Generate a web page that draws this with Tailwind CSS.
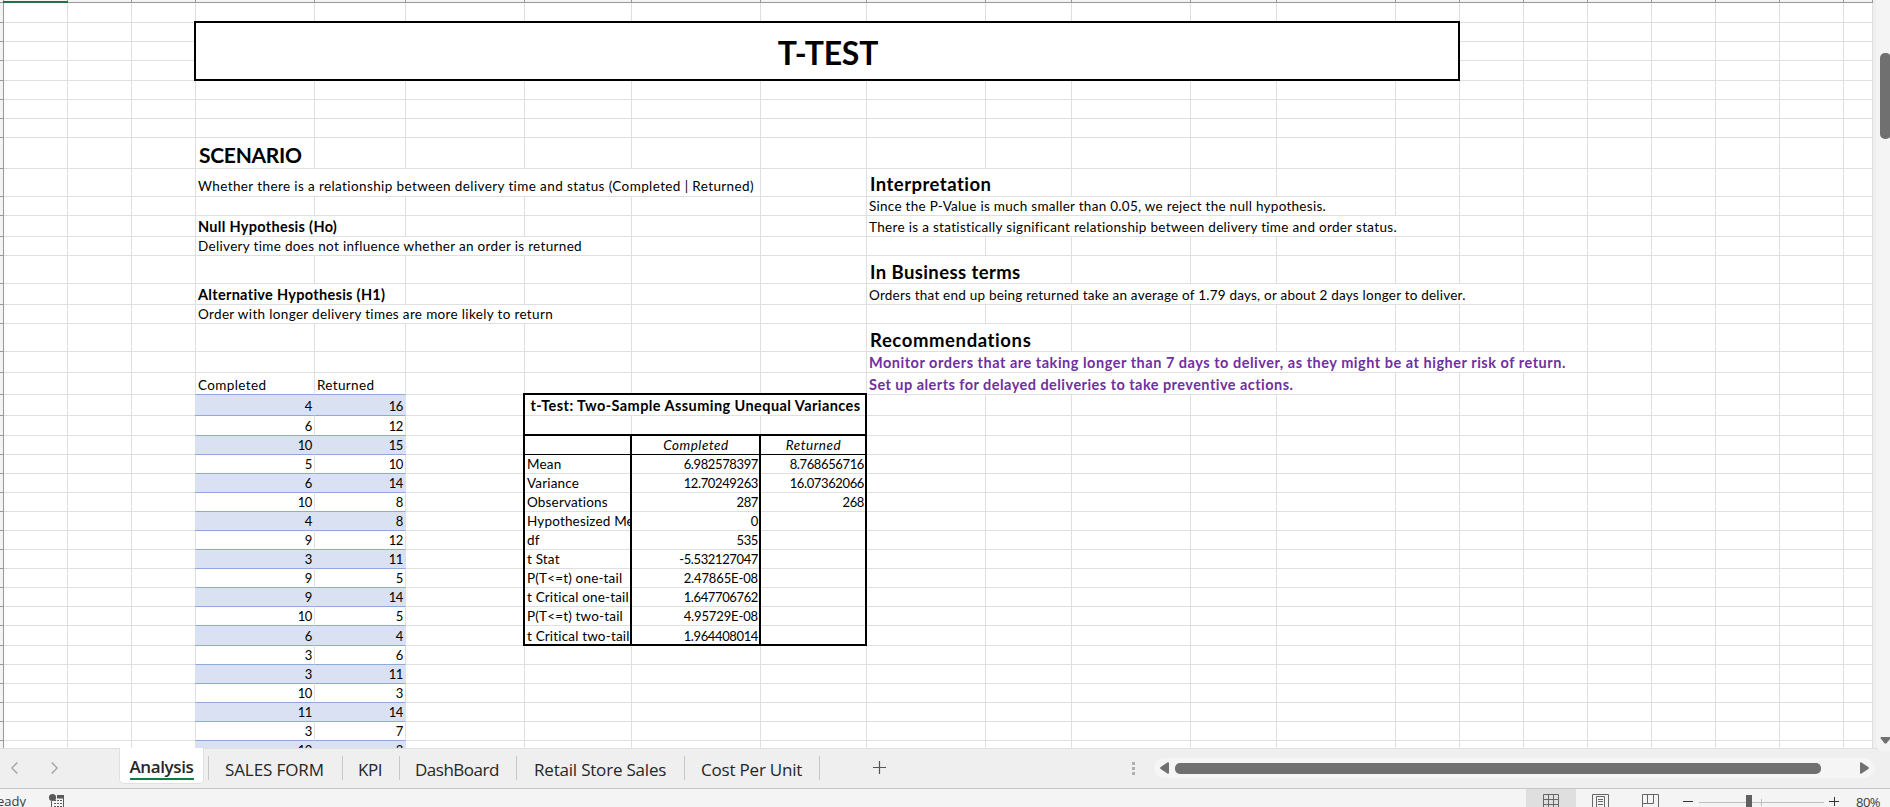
<!DOCTYPE html>
<html lang="en">
<head>
<meta charset="utf-8">
<title>Retail Store - Analysis</title>
<script src="https://cdn.jsdelivr.net/npm/@tailwindcss/browser@4"></script>
</head>
<body class="w-[1890px] h-[807px] overflow-hidden bg-[#efefef] flex flex-col font-['Lato',sans-serif] text-black">

<main class="flex h-[748px]">
  <!-- row header edge -->
  <div id="rowEdge" class="w-[4px] h-[748px] shrink-0 bg-[#f3f3f3] border-r border-[#999] flex flex-col pt-[2px] overflow-hidden"></div>
  <div class="w-[1869px] shrink-0 flex flex-col">
    <!-- column header edge -->
    <div id="colEdge" class="h-[3px] shrink-0 bg-[#f3f3f3] border-b border-[#999] flex relative"><div class="absolute -left-px top-[1px] w-[65px] h-[2px] bg-[#217346]"></div></div>
    <div id="sheet" class="grid w-[1869px] h-[745px] overflow-hidden bg-white grid-cols-[64px_64px_64px_119px_91px_119px_107px_129px_106px_119px_86px_119px_86px_119px_64px_64px_64px_64px_64px_64px_64px_29px] grid-rows-[20px_19px_19px_20px_19px_19px_19px_31px_28px_19px_21px_19px_28px_21px_19px_28px_21px_22px_21px_20px_19px_19px_19px_19px_19px_19px_19px_19px_19px_19px_20px_19px_19px_19px_19px_19px_7px]"></div>
  </div>
  <!-- vertical scrollbar -->
  <div class="flex-1 flex pl-[3px] relative">
    <div class="flex-1 h-[751px] bg-[#f4f4f4] flex flex-col justify-between pl-1 pt-[53px] pb-[7px] rounded-bl-lg">
      <div class="w-[11px] h-[86px] rounded-[5px] bg-[#707070]"></div>
      <svg class="w-[11px] h-[7px] shrink-0" viewBox="0 0 11 7"><path d="M1 0H10Q11 .8 10.300 1.600L6.500 6.300Q5.500 7.200 4.500 6.300L.7 1.600Q0 .8 1 0Z" fill="#707070"/></svg>
    </div>
  </div>
</main>

<!-- sheet tabs -->
<nav class="h-[40px] shrink-0 bg-[#efefef] border-t border-[#e0e0e0] flex font-['Open_Sans',sans-serif] text-[17px] text-[#262626]">
  <div class="w-[119px] flex pt-[13px] pl-[11px] gap-[33px]">
    <svg class="w-[7px] h-[12px]" viewBox="0 0 7 12" fill="none" stroke="#a0a0a0" stroke-width="1.300"><path d="M6.300 .5L.8 6L6.300 11.500"/></svg>
    <svg class="w-[7px] h-[12px]" viewBox="0 0 7 12" fill="none" stroke="#a0a0a0" stroke-width="1.300"><path d="M.7 .5L6.200 6L.7 11.500"/></svg>
  </div>
  <div class="w-[85px] h-[36px] -mt-px bg-white rounded-b-[5px] border-x border-b border-[#e0e0e0] flex flex-col items-center">
    <span class="font-semibold tracking-[-0.38px] leading-[24px] h-[30px] pt-[7px]">Analysis</span>
    <span class="w-[64px] h-[2px] bg-[#107c41]"></span>
  </div>
  <div class="flex h-[24px] mt-[7px] leading-[28px] ml-[4px]">
    <span class="w-[134px] h-[24px] border-l border-[#c8c8c8] pl-[16px] whitespace-nowrap tracking-[-0.1px]">SALES FORM</span>
    <span class="w-[57px] h-[24px] border-l border-[#c8c8c8] pl-[15px] whitespace-nowrap tracking-[-0.5px]">KPI</span>
    <span class="w-[117px] h-[24px] border-l border-[#c8c8c8] pl-[15px] whitespace-nowrap tracking-[-0.5px]">DashBoard</span>
    <span class="w-[168px] h-[24px] border-l border-[#c8c8c8] pl-[17px] whitespace-nowrap tracking-[-0.2px]">Retail Store Sales</span>
    <span class="w-[136px] h-[24px] border-x border-[#c8c8c8] pl-[16px] whitespace-nowrap tracking-[-0.2px]">Cost Per Unit</span>
  </div>
  <svg class="w-[13px] h-[13px] mt-[12px] ml-[53px]" viewBox="0 0 13 13" stroke="#555" stroke-width="1.200"><path d="M6.500 0V13M0 6.500H13"/></svg>
  <div class="ml-[246px] mt-[13px] flex flex-col gap-[2px] w-[3px]">
    <i class="size-[3px] bg-[#b0b0b0]"></i><i class="size-[3px] bg-[#b0b0b0]"></i><i class="size-[3px] bg-[#b0b0b0]"></i>
  </div>
  <div class="ml-[19px] mt-[9px] w-[721px] h-[20px] rounded-full bg-[#f5f5f5] flex items-center pl-[6px]">
    <svg class="w-[9px] h-[12px]" viewBox="0 0 9 12"><path d="M9 1V11Q8.600 12.200 7.400 11.600L.7 7Q-.5 6 .7 5L7.400 .4Q8.600 -.2 9 1Z" fill="#707070"/></svg>
    <div class="ml-[6px] w-[646px] h-[11px] rounded-[5px] bg-[#707070]"></div>
    <svg class="ml-[39px] w-[9px] h-[12px]" viewBox="0 0 9 12"><path d="M0 1V11Q.4 12.200 1.600 11.600L8.300 7Q9.500 6 8.300 5L1.600 .4Q.4 -.2 0 1Z" fill="#707070"/></svg>
  </div>
</nav>

<!-- status bar -->
<footer class="h-[19px] shrink-0 bg-[#f4f4f4] border-t border-[#c6c6c6] flex overflow-hidden font-['Open_Sans',sans-serif] text-[#3b3b3b]">
  <span class="w-[60px] -ml-[11px] text-[13px] leading-[25px] whitespace-nowrap">Ready</span>
  <svg class="w-[16px] h-[18px]" viewBox="0 0 16 18"><path fill="none" stroke="#5a5a5a" d="M2.500 12V18M14.500 9V18"/><path fill="none" stroke="#5a5a5a" stroke-dasharray="2 1" d="M5 11.500H13M5 14.500H13M5 17.500H13"/><rect x="8" y="6" width="7" height="3.500" fill="#5a5a5a"/><circle cx="3.500" cy="8.500" r="3.600" fill="#5a5a5a"/></svg>
  <div class="ml-auto flex w-[364px] shrink-0">
    <div class="w-[50px] bg-[#dfdfdf] pl-[17px]">
      <svg class="w-[16px] h-[18px]" viewBox="0 0 16 18" fill="none" stroke="#666"><path d="M.5 18V5.500H15.500V18M5.500 5V18M10.500 5V18M0 10.500H16M0 15.500H16"/></svg>
    </div>
    <svg class="w-[17px] h-[18px] ml-[16px]" viewBox="0 0 17 18" fill="none" stroke="#666"><path d="M.5 18V5.500H16.500V18M4.500 18V7.500H12.500V18M6 10.500H11M6 12.500H11M6 15.500H11"/></svg>
    <svg class="w-[17px] h-[18px] ml-[33px]" viewBox="0 0 17 18" fill="none" stroke="#666"><path d="M.5 18V5.500H16.500V18M5.500 5V14.500H11.500V5M0 14.500H6"/></svg>
    <i class="ml-[24px] mt-[12px] w-[10px] h-px bg-[#333]"></i>
    <div class="ml-[6px] w-[125px] h-[18px] relative">
      <i class="absolute left-0 top-[13px] w-full h-px bg-[#c0c0c0]"></i>
      <i class="absolute left-[62px] top-[10px] w-px h-[7px] bg-[#c0c0c0]"></i>
      <i class="absolute left-[47px] top-[6px] w-[6px] h-[12px] bg-[#606060]"></i>
    </div>
    <svg class="w-[11px] h-[18px] ml-[5px]" viewBox="0 0 11 18" stroke="#333"><path d="M5.500 8V17M0 12.500H10"/></svg>
    <span class="ml-[16px] text-[13px] leading-[26px] tracking-[-0.5px]">80%</span>
  </div>
</footer>

<script>
  const LAST_ROW = 37, LAST_COL = 22;
  const heights = [20,19,19,20,19,19,19,31,28,19,21,19,28,21,19,28,21,22,21,20,19,19,19,19,19,19,19,19,19,19,20,19,19,19,19,19,7];
  const widths = [64,64,64,119,91,119,107,129,106,119,86,119,86,119,64,64,64,64,64,64,64,29];

  const style = {
    body: 'text-[13.5px] leading-[18px] pl-[2px] tracking-[0.34px]',
    note: 'text-[13.5px] leading-[18px] pl-[2px] tracking-[0.25px]',
    label: 'text-[13.5px] leading-[18px] pl-[2px] tracking-[0.17px]',
    bold: 'text-[14.5px] leading-[18px] pl-[2px] tracking-[0.3px] font-bold',
    purple: 'text-[14.5px] leading-[18px] pl-[2px] tracking-[0.5px] font-bold text-[#7030a0]',
    h1: 'text-[21px] leading-[22px] pl-[3px] pb-[2px] tracking-[-0.28px] font-bold',
    h2: 'text-[18.5px] leading-[20px] pl-[3px] pb-px tracking-[0.4px] font-bold',
    num: 'text-[13px] leading-[18px] pr-[2px] tracking-[-0.38px] justify-end',
    stat: 'text-[13px] leading-[18px] pr-[2px] tracking-[-0.38px] justify-end',
    statE: 'text-[13px] leading-[18px] pr-[2px] tracking-[-0.13px] justify-end',
    ital: 'text-[13.5px] leading-[18px] tracking-[0.53px] justify-center italic',
    title: 'text-[14.5px] leading-[18px] tracking-[0.43px] justify-center font-bold',
  };

  // [row, column, column span, text, style, letter spacing]
  const cells = [
    [8,4,1,'SCENARIO','h1'],
    [9,4,5,'Whether there is a relationship between delivery time and status (Completed | Returned)','body',.39],
    [9,10,2,'Interpretation','h2',.46],
    [10,10,5,'Since the P-Value is much smaller than 0.05, we reject the null hypothesis.','note',.278],
    [11,4,2,'Null Hypothesis (Ho)','bold'],
    [11,10,6,'There is a statistically significant relationship between delivery time and order status.','note',.318],
    [12,4,4,'Delivery time does not influence whether an order is returned','body',.325],
    [13,10,2,'In Business terms','h2'],
    [14,4,2,'Alternative Hypothesis (H1)','bold'],
    [14,10,7,'Orders that end up being returned take an average of 1.79 days, or about 2 days longer to deliver.','note',.22],
    [15,4,4,'Order with longer delivery times are more likely to return','body'],
    [16,10,2,'Recommendations','h2',.6],
    [17,10,8,'Monitor orders that are taking longer than 7 days to deliver, as they might be at higher risk of return.','purple',.52],
    [18,4,1,'Completed','body',.39],
    [18,5,1,'Returned','body'],
    [18,10,5,'Set up alerts for delayed deliveries to take preventive actions.','purple',.46],
    [19,7,3,'t-Test: Two-Sample Assuming Unequal Variances','title'],
    [21,8,1,'Completed','ital'],
    [21,9,1,'Returned','ital'],
  ];
  [[4,16],[6,12],[10,15],[5,10],[6,14],[10,8],[4,8],[9,12],[3,11],[9,5],[9,14],[10,5],[6,4],[3,6],[3,11],[10,3],[11,14],[3,7],[12,3]]
    .forEach(([c, r], i) => cells.push([19 + i,4,1,c,'num'], [19 + i,5,1,r,'num']));
  [['Mean','6.982578397','8.768656716'],['Variance','12.70249263','16.07362066'],['Observations','287','268'],['Hypothesized Mean Difference','0',''],['df','535',''],['t Stat','-5.532127047',''],['P(T<=t) one-tail','2.47865E-08',''],['t Critical one-tail','1.647706762',''],['P(T<=t) two-tail','4.95729E-08',''],['t Critical two-tail','1.964408014','']]
    .forEach(([n, a, b], i) => cells.push([22 + i,7,1,n,'label'], [22 + i,8,1,a,a.includes('E') ? 'statE' : 'stat'], [22 + i,9,1,b,'stat']));

  const at = new Map(cells.map(c => [c[0] + ':' + c[1], c]));
  const sheet = document.getElementById('sheet');
  const add = (cls, row, col, rows, cols, text) => {
    const el = document.createElement('div');
    el.className = cls;
    el.style.gridArea = `${row} / ${col} / span ${rows} / span ${cols}`;
    if (text !== undefined) { const s = document.createElement('span'); s.textContent = text; el.append(s); }
    sheet.append(el);
    return el;
  };
  for (let r = 1; r <= LAST_ROW; r++) {
    for (let c = 1; c <= LAST_COL;) {
      const cell = at.get(r + ':' + c);
      const span = cell ? cell[2] : 1;
      const inTable = r >= 18 && (c === 4 || c === 5);
      const band = inTable && r > 18 && r % 2 === 1;
      const edge = (band ? 'border-r-[#d9e1f2] bg-[#d9e1f2] ' : 'border-r-[#dfdfdf] ')
        + (inTable ? 'border-b-[#8ea9db] ' : 'border-b-[#dfdfdf] ')
        + (inTable && c === 4 ? (band ? '-ml-px ' : '-ml-px border-l border-l-[#dfdfdf] ') : '')
        + (r === LAST_ROW ? 'items-start ' : 'items-end border-b ');
      const el = add('flex overflow-hidden whitespace-nowrap border-r ' + edge + (cell ? style[cell[4]] : ''), r, c, 1, span, cell ? cell[3] : undefined);
      if (cell && cell[5]) el.style.letterSpacing = cell[5] + 'px';
      if (cell && r === 9) el.firstChild.className = 'mb-px';
      c += span;
    }
  }
  add('bg-white border-2 border-black -ml-[2px] -mt-[2px] flex items-center justify-center pt-[3px] pl-[2px] text-[32px] leading-[40px] tracking-[-0.2px] font-bold', 2, 4, 3, 12, 'T-TEST');
  add('border-2 border-black -ml-[2px] -mt-[2px]', 19, 7, 2, 3);
  add('border-2 border-black -ml-[2px] -mt-[2px]', 21, 7, 11, 3);
  add('border-x-2 border-black -ml-[2px]', 21, 8, 11, 1);
  add('border-b border-black', 21, 7, 1, 3);

  heights.forEach(h => {
    const t = document.createElement('i');
    t.className = 'shrink-0 w-full border-t border-[#999]';
    t.style.height = h + 'px';
    document.getElementById('rowEdge').append(t);
  });
  widths.forEach(w => {
    const t = document.createElement('i');
    t.className = 'shrink-0 h-[2px] border-r border-[#999]';
    t.style.width = w + 'px';
    document.getElementById('colEdge').append(t);
  });
</script>
</body>
</html>
